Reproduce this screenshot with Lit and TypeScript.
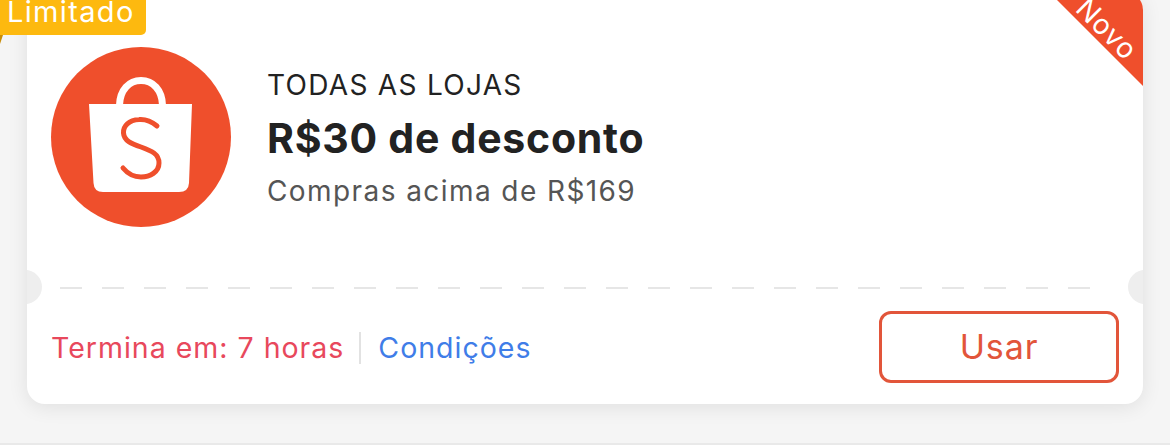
import { LitElement, html, css } from "lit";
import { customElement } from "lit/decorators.js";

@customElement("app-root")
export class AppRoot extends LitElement {
  static styles = css`
    :host { display: block; width: 1170px; height: 445px; overflow: hidden; position: relative; background: #f5f5f5; font-family: Inter, "Noto Sans", sans-serif; }
    .page { height: 443px; padding: 0 27px; border-bottom: 2px solid #e9e9e9; overflow: hidden; }
    .card { position: relative; margin-top: -8px; height: 412px; background: #fff; border-radius: 18px; box-shadow: 0 3px 20px rgba(0,0,0,.09); display: flex; flex-direction: column; }
    .top { height: 303px; box-sizing: border-box; padding: 55px 0 0 24px; display: flex; gap: 36px; }
    .logo { width: 180px; height: 180px; flex: none; display: block; }
    .info { display: flex; flex-direction: column; padding-top: 19px; }
    .shop { font-size: 28px; line-height: 38px; color: #222; letter-spacing: 1.3px; }
    .title { font-size: 41px; line-height: 52px; font-weight: 700; color: #222; margin-top: 8px; letter-spacing: .75px; }
    .min { font-size: 28px; line-height: 38px; color: #555; margin-top: 8px; letter-spacing: 1.42px; }
    .sep { height: 2px; margin: -8px 52px 0 33px; background: repeating-linear-gradient(90deg, #e6e6e6 0 22px, transparent 22px 42px); }
    .bottom { flex: 1; display: flex; align-items: center; justify-content: space-between; padding: 0 24px 0 24px; }
    .meta { display: flex; align-items: center; font-size: 28.5px; letter-spacing: 1px; padding-top: 2px; }
    .end { color: #e8485c; }
    .bar { width: 2px; height: 32px; background: #e2e2e2; margin: 0 17px 0 15px; }
    .cond { color: #3f7de8; }
    .use { width: 240px; height: 72px; box-sizing: border-box; border: 3px solid #e2553a; border-radius: 12px; color: #e2553a; background: #fff; font: inherit; font-size: 34px; letter-spacing: .9px; margin-top: 0; padding: 0; }
    .clipl, .clipr { position: absolute; top: 270px; width: 16px; height: 50px; overflow: hidden; }
    .clipl { left: 0; }
    .clipr { right: 0; }
    .notch { position: absolute; top: 8px; width: 34px; height: 34px; border-radius: 50%; background: #eeeeee; }
    .clipl .notch { left: -19px; }
    .clipr .notch { right: -19px; }
    .corner { position: absolute; right: 0; top: 0; width: 94px; height: 94px; border-top-right-radius: 18px; overflow: hidden; }
    .corner svg { display: block; }
    .novo { position: absolute; left: 13px; top: 22px; width: 90px; text-align: center; color: #fff; font-size: 28px; line-height: 30px; transform: rotate(45deg); letter-spacing: .9px; }
    .badge { position: absolute; left: 0; top: 0; width: 146px; height: 35px; background: #fdb90f; border-radius: 0 0 5px 0; color: #fff; font-size: 29px; line-height: 24px; padding-left: 7px; box-sizing: border-box; letter-spacing: 1.35px; }
    .fold { position: absolute; left: 0; top: 35px; width: 0; height: 0; border-top: 9px solid #c98d06; border-right: 3px solid transparent; }
  `;

  render() {
    return html`
      <div class="page">
        <div class="card">
          <div class="top">
            <svg class="logo" viewBox="0 0 180 180">
              <circle cx="90" cy="90" r="90" fill="#ef4f2c"/>
              <path d="M68.500 58 C69 43 78 33.500 90 33.500 C102 33.500 111 43 111.500 58" fill="none" stroke="#fff" stroke-width="7"/>
              <path d="M38 57 H141 L138 136 Q137.500 145 128 145 H52 Q43 145 42.500 136 Z" fill="#fff"/>
              <path d="M106 79 C100 74 94 72 88 72.500 C78 73 72 79 72.500 86 C73 94 81 97 90 100 C101 104 108 107 108 116 C108 125 99 130 90 130 C83 130 77 127 72 121" fill="none" stroke="#ef4f2c" stroke-width="5" stroke-linecap="round"/>
            </svg>
            <div class="info">
              <div class="shop">TODAS AS LOJAS</div>
              <div class="title">R$30 de desconto</div>
              <div class="min">Compras acima de R$169</div>
            </div>
          </div>
          <div class="sep"></div>
          <div class="bottom">
            <div class="meta">
              <span class="end">Termina em: 7 horas</span>
              <span class="bar"></span>
              <span class="cond">Condições</span>
            </div>
            <button class="use">Usar</button>
          </div>
          <div class="clipl"><div class="notch"></div></div>
          <div class="clipr"><div class="notch"></div></div>
          <div class="corner">
            <svg width="94" height="94" viewBox="0 0 94 94"><path d="M0 0 H94 V94 Z" fill="#ef4f2c"/></svg>
            <div class="novo">Novo</div>
          </div>
        </div>
      </div>
      <div class="badge">Limitado</div>
      <div class="fold"></div>
    `;
  }
}
